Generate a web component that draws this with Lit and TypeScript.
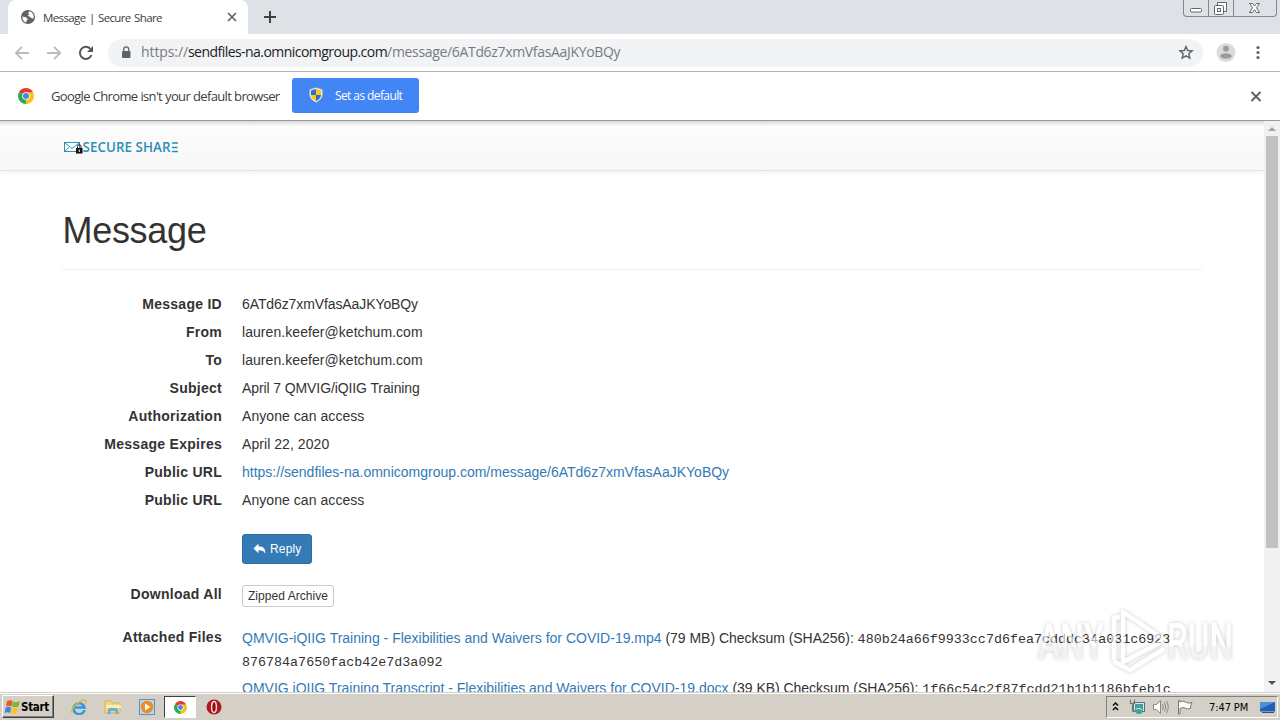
import { html, css, svg, LitElement } from 'lit';
import { customElement, property } from 'lit/decorators.js';

const MESSAGE_URL = 'https://sendfiles-na.omnicomgroup.com/message/6ATd6z7xmVfasAaJKYoBQy';

const DETAILS = [
  { label: 'Message ID', value: '6ATd6z7xmVfasAaJKYoBQy', style: 'tight' },
  { label: 'From', value: 'lauren.keefer@ketchum.com' },
  { label: 'To', value: 'lauren.keefer@ketchum.com' },
  { label: 'Subject', value: 'April 7 QMVIG/iQIIG Training', style: 'tight' },
  { label: 'Authorization', value: 'Anyone can access' },
  { label: 'Message Expires', value: 'April 22, 2020' },
  { label: 'Public URL', value: MESSAGE_URL, style: 'link' },
  { label: 'Public URL', value: 'Anyone can access' },
];

const FILES = [
  {
    name: 'QMVIG-iQIIG Training - Flexibilities and Waivers for COVID-19.mp4',
    size: '79 MB',
    hash: ['480b24a66f9933cc7d6fea7cdddc34a031c6923', '876784a7650facb42e7d3a092'],
  },
  {
    name: 'QMVIG iQIIG Training Transcript - Flexibilities and Waivers for COVID-19.docx',
    size: '39 KB',
    hash: ['1f66c54c2f87fcdd21b1b1186bfeb1c'],
  },
];

const chromeLogo = svg`
  <path d="M8 8 L1.1 4 A8 8 0 0 1 14.9 4Z" fill="#e33b2e" />
  <path d="M8 8 L14.9 4 A8 8 0 0 1 8 16Z" fill="#fbc116" />
  <path d="M8 8 L8 16 A8 8 0 0 1 1.1 4Z" fill="#2da94f" />
  <path d="M8 4.2 H15 L14 6 H11Z" fill="#fbc116" />
  <circle cx="8" cy="8" r="3.8" fill="#fff" />
  <circle cx="8" cy="8" r="3" fill="#4285f4" />
`;

@customElement('browser-bar')
export class BrowserBar extends LitElement {
  static styles = css`
    :host {
      display: block;
      font-family: 'Open Sans', 'Noto Sans', sans-serif;
      color: #3c4043;
    }

    svg {
      display: block;
      flex: none;
    }

    .tabs {
      display: flex;
      height: 34px;
      padding-left: 8px;
      background: #dee1e6;
    }

    .tab {
      display: flex;
      align-items: center;
      box-sizing: border-box;
      width: 240px;
      padding: 0 10px 0 12px;
      border-radius: 8px 8px 0 0;
      background: #fff;
      font-size: 11.5px;
    }

    .tab-title {
      flex: 1;
      margin-left: 7px;
      letter-spacing: -0.62px;
      word-spacing: 1px;
      white-space: nowrap;
    }

    .new-tab {
      margin: 10px 0 0 15px;
    }

    .window {
      display: flex;
      box-sizing: border-box;
      width: 94px;
      height: 17px;
      margin: 0 3px 0 auto;
      border: 1px solid #83878d;
      border-top: 0;
      border-radius: 0 0 4px 4px;
    }

    .toolbar {
      display: flex;
      align-items: center;
      box-sizing: border-box;
      height: 38px;
      padding: 0 14px;
      border-bottom: 1px solid #b4b4b4;
      background: #fff;
    }

    .back {
      margin-right: 16px;
    }

    .forward {
      margin-right: 16px;
    }

    .omnibox {
      display: flex;
      flex: 1;
      align-items: center;
      height: 28px;
      margin: 0 13px 0 14px;
      padding: 0 9px 0 12px;
      border-radius: 14px;
      background: #f1f3f4;
      font-size: 14px;
      color: #777b80;
    }

    .url {
      flex: 1;
      margin-left: 9px;
      padding-bottom: 2px;
      letter-spacing: -0.33px;
    }

    .scheme {
      letter-spacing: -0.1px;
    }

    .host {
      color: #202124;
      letter-spacing: -0.54px;
    }

    .menu {
      margin-left: 14px;
    }

    .infobar {
      display: flex;
      align-items: center;
      box-sizing: border-box;
      height: 49px;
      padding: 0 18px 1px;
      border-bottom: 1px solid #999;
      background: #fff;
      font-size: 13px;
    }

    .notice {
      width: 241px;
      margin-left: 17px;
      letter-spacing: -0.65px;
      word-spacing: 0.2px;
      white-space: nowrap;
    }

    .set-default {
      display: flex;
      align-items: center;
      box-sizing: border-box;
      width: 127px;
      height: 35px;
      padding: 0 0 1px 17px;
      border-radius: 3px;
      background: #4285f4;
      color: #fff;
      font-size: 12px;
      letter-spacing: -0.6px;
      gap: 12px;
    }

    .dismiss {
      margin-left: auto;
    }
  `;

  render() {
    return html`
      <div class="tabs">
        <div class="tab">
          <svg width="16" height="16" viewBox="0 0 16 16">
            <circle cx="8" cy="8" r="7" fill="#5f6368" />
            <path d="M2.4 7.5 L6 8.2 L8 10.2 L6.6 11.2 L6.4 13.6 A6 6 0 0 1 2.4 7.5Z" fill="#fff" />
            <path d="M9.6 2.3 L8 4 L9.2 5.4 L7.4 7 L9.6 7.6 L11 9 L13.6 9.4 A6 6 0 0 0 9.6 2.3Z" fill="#fff" />
          </svg>
          <span class="tab-title">Message | Secure Share</span>
          <svg width="12" height="12" viewBox="0 0 12 12">
            <path d="M2 2 L10 10 M10 2 L2 10" stroke="#5f6368" stroke-width="1.7" />
          </svg>
        </div>
        <svg class="new-tab" width="14" height="14" viewBox="0 0 14 14">
          <path d="M7 1 V13 M1 7 H13" stroke="#3c4043" stroke-width="2" />
        </svg>
        <div class="window">
          <svg width="92" height="16" viewBox="0 0 92 16" fill="none" stroke="#62666c">
            <path d="M24.5 0 V16 M49.5 0 V16" stroke="#83878d" />
            <rect x="6.5" y="8.5" width="11" height="3.5" rx="1" fill="#fff" />
            <path d="M33.5 5.5 V2.5 H42.5 V11.5 H39.5" fill="#fff" />
            <rect x="30.5" y="5.5" width="9" height="9" rx="1" fill="#fff" />
            <rect x="33.5" y="8.5" width="3" height="3" />
            <path d="M65.5 3.5 H68.5 L70.5 6 L72.5 3.5 H75.5 L72.5 7.8 L75.5 12.5 H72.5 L70.5 9.8 L68.5 12.5 H65.5 L68.5 7.8Z" fill="#fff" />
          </svg>
        </div>
      </div>
      <div class="toolbar">
        <svg class="back" width="16" height="16" viewBox="0 0 16 16">
          <path d="M15 8 H2 M8 1.8 L1.8 8 L8 14.2" fill="none" stroke="#b9bbbe" stroke-width="1.8" />
        </svg>
        <svg class="forward" width="16" height="16" viewBox="0 0 16 16">
          <path d="M1 8 H14 M8 1.8 L14.2 8 L8 14.2" fill="none" stroke="#b9bbbe" stroke-width="1.8" />
        </svg>
        <svg width="16" height="16" viewBox="0 0 16 16">
          <path d="M13.5 10 A6 6 0 1 1 12.4 3.9" fill="none" stroke="#54585d" stroke-width="2" />
          <path d="M15 1 V7 H9Z" fill="#54585d" />
        </svg>
        <div class="omnibox">
          <svg width="12" height="14" viewBox="0 0 12 14">
            <rect x="2" y="5" width="8.5" height="7" rx="1" fill="#5f6368" />
            <path d="M3.8 5.5 V3.3 A2.45 2.45 0 0 1 8.7 3.3 V5.5" fill="none" stroke="#5f6368" stroke-width="1.3" />
          </svg>
          <span class="url"
            ><span class="scheme">https://</span><span class="host">sendfiles-na.omnicomgroup.com</span
            >/message/6ATd6z7xmVfasAaJKYoBQy</span
          >
          <svg width="16" height="16" viewBox="0 0 16 16">
            <path
              d="M8 1.5 L9.7 5.5 L14.1 5.9 L10.8 8.8 L11.8 13.1 L8 10.8 L4.2 13.1 L5.2 8.8 L1.9 5.9 L6.3 5.5Z"
              fill="none"
              stroke="#5f6368"
              stroke-width="1.4"
            />
          </svg>
        </div>
        <svg width="20" height="20" viewBox="0 0 20 20">
          <circle cx="10" cy="9.5" r="9.5" fill="#dadbdd" />
          <circle cx="10" cy="5.7" r="3" fill="#9a9c9f" />
          <ellipse cx="10" cy="13" rx="5.8" ry="2.8" fill="#9a9c9f" />
        </svg>
        <svg class="menu" width="16" height="16" viewBox="0 0 16 16" fill="#5f6368">
          <circle cx="8" cy="2.5" r="1.6" />
          <circle cx="8" cy="7.5" r="1.6" />
          <circle cx="8" cy="12.5" r="1.6" />
        </svg>
      </div>
      <div class="infobar">
        <svg width="16" height="16" viewBox="0 0 16 16">${chromeLogo}</svg>
        <span class="notice">Google Chrome isn't your default browser</span>
        <div class="set-default">
          <svg width="14" height="16" viewBox="0 0 14 16">
            <path d="M7 0.5 L13.5 2.5 V8 Q13 13 7 15.5 Q1 13 0.5 8 V2.5Z" fill="#e8e3cf" />
            <path d="M7 2 V8 H2 V3.5Z M7 8 H12 Q11.5 12 7 14Z" fill="#2f6fd0" />
            <path d="M7 2 V8 H12 V3.5Z M7 8 H2 Q2.5 12 7 14Z" fill="#f8cb1c" />
          </svg>
          Set as default
        </div>
        <svg class="dismiss" width="12" height="12" viewBox="0 0 12 12">
          <path d="M1.5 2 L10.5 11 M10.5 2 L1.5 11" stroke="#5f6368" stroke-width="2" />
        </svg>
      </div>
    `;
  }
}

@customElement('message-page')
export class MessagePage extends LitElement {
  static styles = css`
    :host {
      display: flex;
      min-height: 0;
      overflow: hidden;
      background: #fff;
      color: #333;
      font: 14px/20px 'Liberation Sans', Arial, sans-serif;
      letter-spacing: 0.06px;
    }

    .page {
      flex: 1;
      overflow: hidden;
    }

    .navbar {
      box-sizing: border-box;
      height: 50px;
      padding: 18px 0 0 63px;
      border-bottom: 1px solid #e4e4e4;
      background: linear-gradient(#d8d8d8, #fcfcfc 5px, #f7f7f7);
      box-shadow: 0 1px 4px rgba(0, 0, 0, 0.07);
    }

    .logo {
      display: block;
    }

    .content {
      width: 1140px;
      margin-left: 62px;
    }

    h1 {
      margin: 0 0 20px;
      padding: 40px 0 18px 0.5px;
      border-bottom: 1px solid #eee;
      font-size: 36px;
      font-weight: 400;
      line-height: 40px;
      letter-spacing: -0.3px;
    }

    .row {
      display: grid;
      grid-template-columns: 160px 1fr;
      column-gap: 20px;
      line-height: 28px;
    }

    .label {
      font-weight: 700;
      text-align: right;
      letter-spacing: 0.27px;
      white-space: nowrap;
    }

    .link {
      color: #337ab7;
      letter-spacing: 0;
    }

    .tight {
      letter-spacing: -0.1px;
    }

    .reply-row {
      margin-top: 20px;
    }

    .reply {
      display: flex;
      align-items: center;
      box-sizing: border-box;
      width: 70px;
      height: 30px;
      padding-left: 10px;
      border: 1px solid #2e6da4;
      border-radius: 3px;
      background: #337ab7;
      color: #fff;
      font-size: 12px;
      letter-spacing: 0.15px;
      gap: 4px;
    }

    .archive-row {
      margin-top: 21px;
      line-height: 18px;
    }

    .archive {
      box-sizing: border-box;
      width: 92px;
      height: 22px;
      border: 1px solid #ccc;
      border-radius: 3px;
      font-size: 12px;
      line-height: 20px;
      text-align: center;
    }

    .files-row {
      margin-top: 19px;
      line-height: 23px;
    }

    .file {
      margin: 1px 0 4px;
      letter-spacing: -0.03px;
      white-space: nowrap;
    }

    .hash {
      font: 13.35px/20px 'Liberation Mono', 'Courier New', monospace;
      letter-spacing: 0.01px;
    }

    .scrollbar {
      display: flex;
      flex-direction: column;
      align-items: center;
      width: 16px;
      background: #f1f1f1;
    }

    .thumb {
      width: 12px;
      height: 412px;
      margin-bottom: auto;
      background: #c1c1c1;
    }
  `;

  render() {
    return html`
      <div class="page">
        <div class="navbar">
          <svg class="logo" width="118" height="16" viewBox="0 0 118 16">
            <rect x="1.5" y="3.5" width="15" height="9" fill="#fff" stroke="#3590b4" />
            <path d="M2 4 L9 9.5 L16 4 M2 12 L6 8.5" fill="none" stroke="#3590b4" />
            <rect x="13" y="9" width="6.5" height="5.5" fill="#111" />
            <path d="M14.5 9 V7.5 A1.7 1.7 0 0 1 18 7.5 V9" fill="none" stroke="#111" />
            <path d="M16.3 10.5 V13" stroke="#fff" />
            <text
              x="19.5"
              y="13"
              font-family="Open Sans, Noto Sans, sans-serif"
              font-size="13.5"
              font-weight="600"
              fill="#2d8fb5"
              textLength="88"
              lengthAdjust="spacingAndGlyphs"
            >
              SECURE SHAR
            </text>
            <path d="M109 4 H115 M109 8.5 H114.5 M109 12.5 H115" stroke="#2d8fb5" stroke-width="1.3" />
          </svg>
        </div>
        <div class="content">
          <h1>Message</h1>
          ${DETAILS.map(
            (d) => html`
              <div class="row">
                <div class="label">${d.label}</div>
                <div class=${d.style ?? 'value'}>${d.value}</div>
              </div>
            `
          )}
          <div class="row reply-row">
            <div></div>
            <div class="reply">
              <svg width="13" height="12" viewBox="0 0 13 12">
                <path d="M5.5 0.5 V3.5 C10.5 3.5 12.5 5.5 12.3 11 C11 8 9 7.3 5.5 7.3 V10.3 L0.5 5.4Z" fill="#fff" />
              </svg>
              Reply
            </div>
          </div>
          <div class="row archive-row">
            <div class="label">Download All</div>
            <div class="archive">Zipped Archive</div>
          </div>
          <div class="row files-row">
            <div class="label">Attached Files</div>
            <div>
              ${FILES.map(
                (f) => html`
                  <div class="file">
                    <span class="link">${f.name}</span> (${f.size}) Checksum (SHA256):
                    ${f.hash.map((part, i) => html`${i ? html`<br />` : ''}<span class="hash">${part}</span>`)}
                  </div>
                `
              )}
            </div>
          </div>
        </div>
      </div>
      <div class="scrollbar">
        <svg width="16" height="15" viewBox="0 0 16 15"><path d="M4 10 L8 6 L12 10Z" fill="#a3a3a3" /></svg>
        <div class="thumb"></div>
        <svg width="16" height="17" viewBox="0 0 16 17"><path d="M4 6 L8 10 L12 6Z" fill="#505050" /></svg>
      </div>
    `;
  }
}

@customElement('task-bar')
export class TaskBar extends LitElement {
  @property({ type: String }) time: string = '7:47 PM';

  static styles = css`
    :host {
      display: flex;
      box-sizing: border-box;
      height: 28px;
      padding: 2px 2px 0;
      border-top: 1px solid #d4d0c8;
      background: linear-gradient(#fff 1px, #d4d0c8 1px);
      font: 11px 'DejaVu Sans Condensed', 'DejaVu Sans', sans-serif;
      color: #000;
    }

    svg {
      display: block;
      flex: none;
    }

    .start {
      display: flex;
      align-items: center;
      box-sizing: border-box;
      width: 52px;
      height: 23px;
      padding-left: 1px;
      border: 1px solid;
      border-color: #fff #404040 #404040 #fff;
      box-shadow: inset -1px -1px #808080;
      font-size: 11.5px;
      font-weight: 700;
      letter-spacing: -0.3px;
    }

    .launch {
      display: flex;
      align-items: center;
      height: 24px;
      margin-left: 17px;
      gap: 17px;
    }

    .active {
      display: flex;
      align-items: center;
      justify-content: center;
      box-sizing: border-box;
      width: 32px;
      height: 22px;
      margin: 0 -7px 0 -8px;
      border: 1px solid;
      border-color: #404040 #fff #fff #404040;
      background: #fff;
    }

    .tray {
      display: flex;
      align-items: center;
      box-sizing: border-box;
      width: 172px;
      height: 22px;
      margin: 1px 0 0 auto;
      padding-left: 4px;
      border: 1px solid;
      border-color: #808080 #fff #fff #808080;
      gap: 8px;
    }

    .time {
      flex: 1;
      padding-left: 8px;
      letter-spacing: -0.1px;
      white-space: nowrap;
    }
  `;

  render() {
    return html`
      <div class="start">
        <svg width="17" height="16" viewBox="0 0 17 16">
          <path d="M3 2 Q5.5 0.5 8.500 2 L7.500 7.500 Q4.500 6 2 7.500Z" fill="#e8562a" />
          <path d="M9 2.5 Q12 4 16 2 L14.5 7.5 Q11 9 8 7.5Z" fill="#7db832" />
          <path d="M1.8 8.5 Q4.5 7 7 8.5 L6 14 Q3.5 12.5 0.5 14Z" fill="#3b86d8" />
          <path d="M7.8 8.5 Q11 10 14.3 8.5 L13 14 Q10 15.5 6.8 14Z" fill="#f7c326" />
        </svg>
        Start
      </div>
      <div class="launch">
        <svg width="16" height="16" viewBox="0 0 16 16">
          <path d="M13.5 11 A5.5 5.5 0 1 1 13.5 8.5 H4" fill="none" stroke="#2f9be0" stroke-width="2.6" />
          <path d="M1 14 C-1 11 7 2 13 1 C16 0.8 15.5 3 14.5 4.5" fill="none" stroke="#e9b92d" stroke-width="1.3" />
        </svg>
        <svg width="18" height="16" viewBox="0 0 18 16">
          <path d="M1 2 H7 L8 4 H16 V14 H1Z" fill="#f3d77a" stroke="#cfa840" stroke-width="0.7" />
          <path d="M2 6 H17 V9 H2Z" fill="#fbeeb4" />
          <path d="M4 15 V11 Q4 9 6 9 H12 Q14 9 14 11 V15 H11.5 V12 H6.5 V15Z" fill="#64aede" />
        </svg>
        <svg width="16" height="16" viewBox="0 0 16 16">
          <rect x="0.5" y="0.5" width="15" height="15" fill="#b7d7ef" stroke="#5b93c2" />
          <circle cx="8" cy="8" r="6.2" fill="#f28a1d" />
          <path d="M6 4.5 L11.5 8 L6 11.5Z" fill="#fff" />
        </svg>
        <div class="active"><svg width="13" height="13" viewBox="0 0 16 16">${chromeLogo}</svg></div>
        <svg width="16" height="16" viewBox="0 0 16 16">
          <circle cx="8" cy="8" r="7.5" fill="#b5161b" />
          <ellipse cx="8" cy="8" rx="2.4" ry="5.5" fill="#8c1014" stroke="#f4dede" stroke-width="1.4" />
        </svg>
      </div>
      <div class="tray">
        <svg width="10" height="12" viewBox="0 0 10 12">
          <path d="M2 4.5 L4.5 2 L7 4.5 M2 9 L4.5 6.500 L7 9" fill="none" stroke="#000" stroke-width="1.4" />
        </svg>
        <svg width="16" height="16" viewBox="0 0 16 16">
          <rect x="4.5" y="3.5" width="11" height="9" fill="#d7e6e8" stroke="#55757c" />
          <rect x="6" y="5" width="8" height="6" fill="#4a9aa8" />
          <circle cx="10" cy="11" r="4" fill="#3fa58e" />
          <path d="M7 10 Q10 8 13 11" fill="none" stroke="#c9efdf" />
          <path d="M1.5 0.5 V4.5 H5.5 V0.5 M3.5 4.5 V12 H6" fill="none" stroke="#777" stroke-width="1.2" />
        </svg>
        <svg width="16" height="16" viewBox="0 0 16 16" fill="none" stroke="#888">
          <path d="M0.5 5.5 H3.5 L7.5 1.5 V14.5 L3.5 10.5 H0.5Z" fill="#fff" />
          <path d="M9.5 5 Q11 8 9.5 11 M11.5 3.5 Q14 8 11.5 12.5 M13.5 2 Q17 8 13.5 14" />
        </svg>
        <svg width="16" height="16" viewBox="0 0 16 16">
          <path d="M1.5 1.5 H3 V3 Q6 1 8.5 3 Q11 5 15 3.5 Q13 7 13.5 9.5 Q10 10.5 8 9 Q5.5 8 3 9.5 V15 H1.5Z" fill="#fff" stroke="#777" />
        </svg>
        <span class="time">${this.time}</span>
        <svg width="17" height="16" viewBox="0 0 17 16">
          <rect x="0" y="3" width="15" height="9.5" fill="#1f5fb8" />
          <path d="M0 3 H15 L0 10Z" fill="#4e8ede" />
          <path d="M2 13.5 H14" stroke="#444b58" />
        </svg>
      </div>
    `;
  }
}

@customElement('app-root')
export class AppRoot extends LitElement {
  static styles = css`
    :host {
      display: flex;
      flex-direction: column;
      position: relative;
      width: 1280px;
      height: 720px;
      overflow: hidden;
    }

    message-page {
      flex: 1;
    }

    .watermark {
      position: absolute;
      left: 1030px;
      top: 600px;
      filter: drop-shadow(0 0 2px rgba(0, 0, 0, 0.32));
      opacity: 0.62;
    }
  `;

  render() {
    return html`
      <browser-bar></browser-bar>
      <message-page></message-page>
      <task-bar></task-bar>
      <svg class="watermark" width="210" height="80" viewBox="0 0 210 80">
        <defs>
          <linearGradient id="fade" x1="0" y1="0" x2="0" y2="1">
            <stop offset="0.55" stop-color="#fff" />
            <stop offset="0.6" stop-color="#ececec" />
          </linearGradient>
        </defs>
        <g font-family="Roboto, sans-serif" font-size="50" font-weight="500" fill="url(#fade)">
          <text x="8" y="59" textLength="66" lengthAdjust="spacingAndGlyphs">ANY</text>
          <text x="137" y="59" textLength="66" lengthAdjust="spacingAndGlyphs">RUN</text>
        </g>
        <g fill="none" stroke="#fff" stroke-width="4.5" stroke-linejoin="round">
          <path d="M84 60 V18 L90 17" />
          <path d="M83 61 L100 70 L134 49" />
          <path d="M93 12 L135 40 L93 62Z" />
        </g>
      </svg>
    `;
  }
}
